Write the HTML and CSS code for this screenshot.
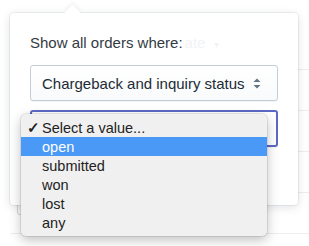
FILE: index.html
```html
<!DOCTYPE html>
<html lang="en">
  <head>
    <meta charset="UTF-8" />
    <meta name="viewport" content="width=device-width, initial-scale=1.0" />
    <title>Order filter</title>
    <link rel="stylesheet" href="styles.css">
  </head>
  <body>
    <div class="list">
      <div class="row"></div>
      <div class="row"></div>
      <div class="row"></div>
      <div class="row"></div>
      <div class="row"><div class="ghost-button"></div></div>
    </div>

    <div class="popover">
      <div class="label">Show all orders where:<span class="ghost">ate <span class="caret">&#9662;</span></span></div>
      <div class="select">
        <span>Chargeback and inquiry status</span>
        <svg class="arrows" width="8" height="11" viewBox="0 0 8 11">
          <path d="M4 0.5 L7.5 4 L0.5 4 Z" fill="#637381" />
          <path d="M4 10.5 L7.5 7 L0.5 7 Z" fill="#637381" />
        </svg>
      </div>
      <div class="select focused"></div>

      <ul class="menu">
        <li><span class="check">&#10003;</span>Select a value...</li>
        <li class="active"><span class="check"></span>open</li>
        <li><span class="check"></span>submitted</li>
        <li><span class="check"></span>won</li>
        <li><span class="check"></span>lost</li>
        <li><span class="check"></span>any</li>
      </ul>
    </div>
  </body>
</html>
```

FILE: styles.css
```css
body {
  margin: 0;
  font-family: "Liberation Sans", Arial, sans-serif;
  background-color: white;
  color: #212b36;
}
.list {
  padding-top: 29px;
  margin-left: 10px;
}
.row {
  height: 40px;
  border-bottom: 1px solid #ebedef;
}
.ghost-button {
  margin-left: 7px;
  height: 21px;
  width: 60px;
  border: 1px solid #d6d9dd;
  border-top: none;
  border-radius: 0 0 3px 3px;
}
.popover {
  position: absolute;
  left: 10px;
  top: 13px;
  width: 248px;
  height: 150px;
  padding: 21px 20px;
  background-color: #fff;
  border-radius: 4px;
  box-shadow: 0 0 0 1px rgba(6, 44, 82, 0.06), 0 2px 10px rgba(33, 43, 54, 0.14);
}
.popover::before {
  content: "";
  position: absolute;
  left: 57px;
  top: -6px;
  width: 11px;
  height: 11px;
  background-color: #fff;
  transform: rotate(45deg);
  box-shadow: -2px -2px 4px rgba(33, 43, 54, 0.06);
}
.label {
  position: relative;
  font-size: 15px;
  line-height: 17px;
  color: #333b44;
}
.ghost {
  margin-left: 2px;
  color: #f2f3f4;
}
.caret {
  margin-left: 4px;
  font-size: 10px;
}
.select {
  display: flex;
  align-items: center;
  justify-content: space-between;
  box-sizing: border-box;
  height: 36px;
  margin-top: 12px;
  padding: 0 16px 0 11px;
  font-size: 15px;
  border: 1px solid #c4cdd5;
  border-radius: 3px;
  background: linear-gradient(#fff, #f9fafb);
  box-shadow: 0 1px 0 rgba(22, 29, 37, 0.05);
}
.select.focused {
  height: 37px;
  margin-top: 9px;
  border: 2px solid #5c6ac4;
  background: #fff;
}
.menu {
  position: absolute;
  left: 11px;
  top: 101px;
  width: 246px;
  margin: 0;
  padding: 4px 0;
  list-style: none;
  background-color: #f0f0f0;
  border-radius: 5px;
  box-shadow: 0 0 0 1px rgba(0, 0, 0, 0.08), 0 4px 12px rgba(0, 0, 0, 0.25);
  font-size: 14.5px;
  color: #222;
}
.menu li {
  display: flex;
  align-items: center;
  height: 19px;
  padding-left: 6px;
}
.menu li.active {
  background-color: #4a99f7;
  color: #fff;
}
.check {
  width: 15px;
  font-size: 15px;
  font-weight: bold;
}
```
